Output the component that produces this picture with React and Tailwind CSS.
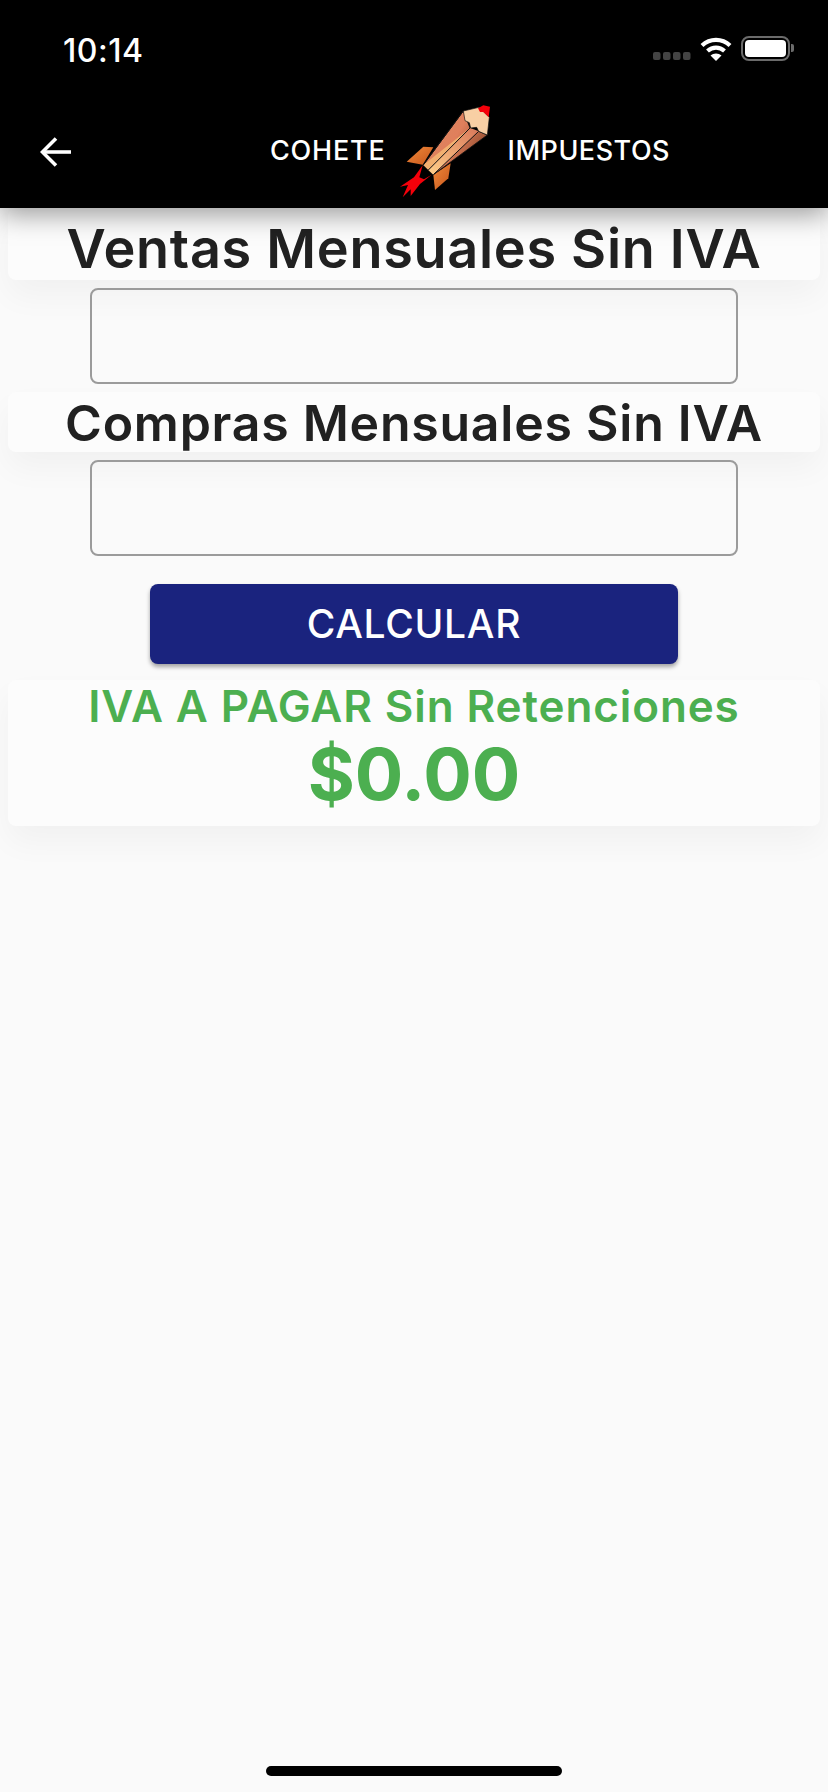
import React from "react";

const font = { fontFamily: "Inter, 'Noto Sans', sans-serif" };

function Rocket() {
  return (
    <svg width="120" height="110" viewBox="0 0 360 330" className="shrink-0 -mt-[6px] -ml-[6px] mr-[8px]">
      <defs>
        <linearGradient id="fin" x1="0" y1="0" x2="1" y2="1">
          <stop offset="0" stopColor="#f08a3a" />
          <stop offset="1" stopColor="#c8561c" />
        </linearGradient>
        <linearGradient id="body" x1="0" y1="0" x2="1" y2="0.6">
          <stop offset="0" stopColor="#d98a60" />
          <stop offset="0.55" stopColor="#e07f5c" />
          <stop offset="1" stopColor="#8f4a2c" />
        </linearGradient>
        <linearGradient id="mid" x1="0" y1="1" x2="1" y2="0">
          <stop offset="0" stopColor="#ffd08a" />
          <stop offset="1" stopColor="#d9785a" />
        </linearGradient>
      </defs>
      <path d="M130 170 L160 172 L128 224 L80 215 Z" fill="url(#fin)" />
      <path d="M212 220 L205 265 L165 300 L160 255 Z" fill="url(#fin)" />
      <path d="M250 63 L130 225 L160 254 L322 135 L296 124 L270 114 Z" fill="url(#body)" stroke="#111" strokeWidth="2.5" />
      <path d="M270 114 L145 240 L130 225 Z" fill="#f2b070" />
      <path d="M296 124 L160 254 L145 240 L270 114 Z" fill="url(#mid)" />
      <path d="M250 63 L130 225 M270 114 L145 240 M296 124 L160 254" stroke="#111" strokeWidth="3" fill="none" />
      <path d="M250 63 L297 52 L328 82 L322 135 L296 124 L290 112 L272 114 L268 98 L255 92 Z" fill="#f8cfa4" stroke="#111" strokeWidth="2" />
      <path d="M294 55 L310 46 L330 50 L326 82 L310 66 L300 66 Z" fill="#f4000a" />
      <path d="M128 226 L102 262 L60 290 L84 285 L68 322 L92 298 L92 318 L120 282 L155 254 L132 268 L118 262 Z" fill="#f4000a" />
    </svg>
  );
}

function StatusIcons() {
  return (
    <div className="flex items-center gap-[9px] mt-[8px]">
      <svg width="38" height="8" viewBox="0 0 38 8" className="mt-[16px]">
        {[0, 10, 20, 30].map((x) => (
          <rect key={x} x={x} y="0" width="7.5" height="8" rx="2" fill="#444" />
        ))}
      </svg>
      <svg width="32" height="24" viewBox="0 0 32 24" fill="none" className="mt-[1px]">
        <path d="M2 8.5 C10 1 22 1 30 8.5" stroke="#fff" strokeWidth="4.2" strokeLinecap="butt" />
        <path d="M7.5 14 C12.5 9.5 19.5 9.5 24.5 14" stroke="#fff" strokeWidth="4.2" />
        <path d="M16 24 L10.5 18.5 C13.5 15.8 18.5 15.8 21.5 18.5 Z" fill="#fff" />
      </svg>
      <div className="flex items-center gap-[1px]">
        <div className="w-[49px] h-[25px] rounded-[8px] border-2 border-[#6b6b6b] p-[2px]">
          <div className="w-full h-full rounded-[4px] bg-white" />
        </div>
        <div className="w-[3px] h-[8px] rounded-r-[2px] bg-[#6b6b6b]" />
      </div>
    </div>
  );
}

function Card({ className, children }) {
  return (
    <div className={`mx-2 rounded-[8px] bg-[#fcfcfc] shadow-[0_16px_32px_rgba(0,0,0,0.04)] text-center ${className}`}>
      {children}
    </div>
  );
}

function Field() {
  return <div className="mx-[90px] h-[96px] rounded-[8px] border-2 border-[#9b9b9b]" />;
}

export default function App() {
  return (
    <div style={font} className="w-[828px] h-[1792px] bg-[#fafafa] relative overflow-hidden">
      <header className="relative z-10 h-[208px] bg-black text-white shadow-[0_6px_26px_rgba(0,0,0,0.4)]">
        <div className="h-[88px] pl-[63px] pr-[34px] flex items-center justify-between">
          <span className="text-[32px] font-medium tracking-[0.5px] mt-[14px]">10:14</span>
          <StatusIcons />
        </div>
        <div className="h-[120px] flex items-center">
          <div className="w-[112px] flex justify-center mt-[8px]">
            <svg width="32" height="30" viewBox="0 0 34 32" fill="none" stroke="#fff" strokeWidth="3.8">
              <path d="M33 16 H3" />
              <path d="M17 1.5 L2.5 16 L17 30.5" />
            </svg>
          </div>
          <div className="flex-1 flex items-center justify-center">
            <span className="text-[27px] font-medium tracking-[0.8px] mt-[6px]">COHETE</span>
            <Rocket />
            <span className="text-[27px] font-medium tracking-[0.5px] mt-[6px]">IMPUESTOS</span>
          </div>
        </div>
      </header>

      <Card className="h-[72px]">
        <h1 className="text-[54px] leading-[72px] font-semibold text-[#212121] tracking-[0.7px] pt-[5px]">Ventas Mensuales Sin IVA</h1>
      </Card>
      <div className="mt-2"><Field /></div>
      <Card className="mt-2 h-[60px]">
        <h2 className="text-[50px] leading-[56px] font-semibold text-[#212121] tracking-[0.75px] pt-[3px]">Compras Mensuales Sin IVA</h2>
      </Card>
      <div className="mt-2"><Field /></div>

      <div className="mt-[28px] flex justify-center">
        <button className="w-[528px] h-[80px] rounded-[8px] bg-[#1a237e] text-white text-[39px] font-medium tracking-[0.7px] shadow-[0_3px_4px_rgba(0,0,0,0.35)]">
          CALCULAR
        </button>
      </div>

      <Card className="mt-4 h-[146px]">
        <div className="text-[#4caf50] font-semibold text-[44px] leading-[50px] tracking-[0.9px] pt-[1px]">IVA A PAGAR Sin Retenciones</div>
        <div className="text-[#4caf50] font-bold text-[72px] leading-[80px] mt-[3px]">$0.00</div>
      </Card>

      <div className="absolute left-[266px] bottom-[16px] w-[296px] h-[10px] rounded-full bg-black" />
    </div>
  );
}
